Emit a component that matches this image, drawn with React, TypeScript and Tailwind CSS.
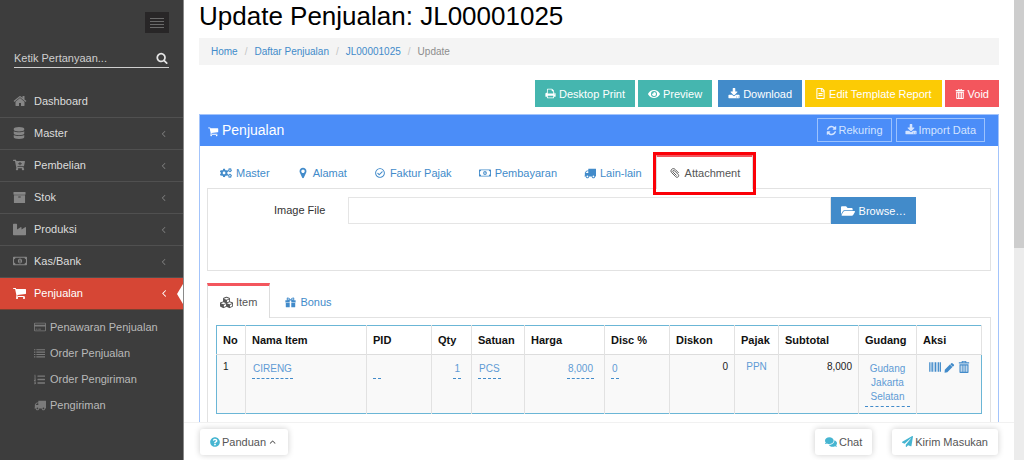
import type { ReactNode } from "react";
import {
  FaDatabase, FaCartPlus, FaIndustry, FaRegMoneyBillAlt, FaListOl,
  FaEye, FaRegFileAlt, FaCogs, FaRegCheckCircle, FaFolderOpen, FaCubes,
  FaQuestionCircle, FaComments, FaPaperPlane,
} from "react-icons/fa";

function glyph(d: string) {
  return function Glyph({ className = "" }: { className?: string }) {
    return (
      <svg viewBox="0 0 1792 1792" fill="currentColor" fillRule="evenodd" className={`shrink-0 ${className}`} aria-hidden="true">
        <path d={d} />
      </svg>
    );
  };
}

const Cart = glyph("M640 1536q0 52-38 90t-90 38-90-38-38-90 38-90 90-90 90 38 38 90zm896 0q0 52-38 90t-90 38-90-38-38-90 38-90 90-90 90 38 38 90zm128-1088v512q0 24-16.5 42.5t-40.5 21.5l-1044 122q13 60 13 70 0 16-24 64h920q26 0 45 19t19 45-19 45-45 19h-1024q-26 0-45-19t-19-45q0-11 8-31.5t16-36 21.5-40 15.5-29.5l-177-823h-204q-26 0-45-19t-19-45 19-45 45-19h256q16 0 28.5 6.5t19.5 15.5 13 24.5 8 26 5.5 29.5 4.5 26h1201q26 0 45 19t19 45z");
const Home = glyph("M1472 992v480q0 26-19 45t-45 19h-384v-384h-256v384h-384q-26 0-45-19t-19-45v-480q0-1 .5-3t.5-3l575-474 575 474q1 2 1 6zm223-69l-62 74q-8 9-21 11h-3q-13 0-21-7l-692-577-692 577q-12 8-24 7-13-2-21-11l-62-74q-8-10-7-23.5t11-21.5l719-599q32-26 76-26t76 26l244 204v-195q0-14 9-23t23-9h192q14 0 23 9t9 23v408l219 182q10 8 11 21.5t-7 23.5z");
const Search = glyph("M1216 832q0-185-131.5-316.5t-316.5-131.5-316.5 131.5-131.5 316.5 131.5 316.5 316.5 131.5 316.5-131.5 131.5-316.5zm512 832q0 52-38 90t-90 38q-54 0-90-38l-343-342q-179 124-399 124-143 0-273.5-55.5t-225-150-150-225-55.5-273.5 55.5-273.5 150-225 225-150 273.5-55.5 273.5 55.5 225 150 150 225 55.5 273.5q0 220-124 399l343 343q37 37 37 90z");
const Download = glyph("M1344 1344q0-26-19-45t-45-19-45 19-19 45 19 45 45 19 45-19 19-45zm256 0q0-26-19-45t-45-19-45 19-19 45 19 45 45 19 45-19 19-45zm128-224v320q0 40-28 68t-68 28h-1472q-40 0-68-28t-28-68v-320q0-40 28-68t68-28h465l135 136q58 56 136 56t136-56l136-136h464q40 0 68 28t28 68zm-325-569q17 41-14 70l-448 448q-18 19-45 19t-45-19l-448-448q-31-29-14-70 17-39 59-39h256v-448q0-26 19-45t45-19h256q26 0 45 19t19 45v448h256q42 0 59 39z");
const Print = glyph("M448 1536h896v-256h-896v256zm0-640h896v-384h-160q-40 0-68-28t-28-68v-160h-640v640zm1152 64q0-26-19-45t-45-19-45 19-19 45 19 45 45 19 45-19 19-45zm128 0v416q0 13-9.5 22.5t-22.5 9.5h-224v160q0 40-28 68t-68 28h-960q-40 0-68-28t-28-68v-160h-224q-13 0-22.5-9.5t-9.5-22.5v-416q0-79 56.5-135.5t135.5-56.5h64v-544q0-40 28-68t68-28h672q40 0 88 20t76 48l152 152q28 28 48 76t20 88v256h64q79 0 135.5 56.5t56.5 135.5z");
const Truck = glyph("M640 1408q0-52-38-90t-90-38-90 38-38 90 38 90 90 38 90-38 38-90zm-384-512h384v-256h-158q-13 0-22 9l-195 195q-9 9-9 22v30zm1280 512q0-52-38-90t-90-38-90 38-38 90 38 90 90 38 90-38 38-90zm256-1088v1024q0 15-4 26.5t-13.5 18.5-16.5 11.5-23.5 6-22.5 2-25.5 0-22.5-.5q0 106-75 181t-181 75-181-75-75-181h-384q0 106-75 181t-181 75-181-75-75-181h-64q-3 0-22.5.5t-25.5 0-22.5-2-23.5-6-16.5-11.5-13.5-18.5-4-26.5q0-26 19-45t45-19v-320q0-8-.5-35t0-38 2.5-34.5 6.5-37 14-30.5 22.5-30l198-198q19-19 50.5-32t58.5-13h160v-192q0-26 19-45t45-19h1024q26 0 45 19t19 45z");
const Trash = glyph("M640 0h512q100 0 100 100v92h412v192H128V192h412v-92q0-100 100-100zM700 110v82h392v-82zM220 500h1352v1172q0 120-120 120H340q-120 0-120-120zM400 660v960h150V660zM700 660v960h120V660zM970 660v960h120V660zM1240 660v960h150V660z");
const Pencil = glyph("M960 416l416 416-832 832-448 96 32-512zm683 96q0 53-37 90l-166 166-416-416 166-165q36-38 90-38 53 0 91 38l235 234q37 39 37 91z");
const Marker = glyph("M1152 640q0-106-75-181t-181-75-181 75-75 181 75 181 181 75 181-75 75-181zm256 0q0 109-33 179l-364 774q-16 33-47.5 52t-67.5 19-67.5-19-46.5-52l-365-774q-33-70-33-179 0-212 150-362t362-150 362 150 150 362z");
const AngleLeft = glyph("M1203 544q0 13-10 23l-393 393 393 393q10 10 10 23t-10 23l-50 50q-10 10-23 10t-23-10l-466-466q-10-10-10-23t10-23l466-466q10-10 23-10t23 10l50 50q10 10 10 23z");
const Archive = glyph("M1088 832q0-26-19-45t-45-19h-256q-26 0-45 19t-19 45 19 45 45 19h256q26 0 45-19t19-45zm576-192v960q0 26-19 45t-45 19h-1408q-26 0-45-19t-19-45v-960q0-26 19-45t45-19h1408q26 0 45 19t19 45zm64-448v256q0 26-19 45t-45 19h-1536q-26 0-45-19t-19-45v-256q0-26 19-45t45-19h1536q26 0 45 19t19 45z");
const Refresh = glyph("M1639 1056q0 5-1 7-64 268-268 434.5t-478 166.5q-146 0-282.5-55t-243.5-157l-129 129q-19 19-45 19t-45-19-19-45v-448q0-26 19-45t45-19h448q26 0 45 19t19 45-19 45l-137 137q71 66 161 102t187 36q134 0 250-65t186-179q11-17 53-117 8-23 30-23h192q13 0 22.5 9.5t9.5 22.5zm25-800v448q0 26-19 45t-45 19h-448q-26 0-45-19t-19-45 19-45l138-138q-148-137-349-137-134 0-250 65t-186 179q-11 17-53 117-8 23-30 23h-199q-13 0-22.5-9.5t-9.5-22.5v-7q65-268 270-434.5t480-166.5q146 0 284 55.5t245 156.5l130-129q19-19 45-19t45 19 19 45z");
const List = glyph("M0 192h224v192H0zM384 192h1408v192H384zM0 576h224v192H0zM384 576h1408v192H384zM0 960h224v192H0zM384 960h1408v192H384zM0 1344h224v192H0zM384 1344h1408v192H384z");
const Card = glyph("M160 256h1472q160 0 160 160v960q0 160-160 160H160q-160 0-160-160V416q0-160 160-160zM128 384v192h1536V384zM128 832v576h1536V832zM256 1152h256v128H256zM640 1152h384v128H640z");
const Gift = glyph("M128 960h640v704H224q-96 0-96-96zM1024 960h640v608q0 96-96 96h-544zM64 512h330q-130-70-130-200 0-220 210-220 230 0 422 300 192-300 422-300 210 0 210 220 0 130-130 200h330v384h-704V560H768v336H64zM500 230q-90 0-90 85 0 100 130 100h210q-120-185-250-185zM1292 230q-130 0-250 185h210q130 0 130-100 0-85-90-85z");
const Barcode = glyph("M0 192h120v1408H0zM200 192h70v1408h-70zM360 192h220v1408H360zM700 192h70v1408h-70zM860 192h220v1408H860zM1180 192h70v1408h-70zM1350 192h200v1408h-200zM1650 192h142v1408h-142z");

function Paperclip({ className = "" }: { className?: string }) {
  return (
    <svg viewBox="0 0 16 16" fill="none" stroke="currentColor" strokeWidth="1.5" strokeLinecap="round" className={`shrink-0 ${className}`} aria-hidden="true">
      <path d="M13.5 7.5 8.2 2.2C6.5.5 4.300.5 2.700 2.100 1.100 3.700 1.100 5.900 2.800 7.600l6.300 6.300c1.300 1.300 2.900 1.300 4 .2s1.100-2.700-.2-4L7.200 4.400c-.8-.8-1.800-.8-2.400-.2s-.6 1.600.2 2.400l5 5" />
    </svg>
  );
}

const menu = [
  { label: "Dashboard", icon: <Home className="size-[14px]" />, arrow: false },
  { label: "Master", icon: <FaDatabase className="size-3" />, arrow: true },
  { label: "Pembelian", icon: <FaCartPlus className="size-3" />, arrow: true },
  { label: "Stok", icon: <Archive className="size-[13px]" />, arrow: true },
  { label: "Produksi", icon: <FaIndustry className="size-[13px]" />, arrow: true },
  { label: "Kas/Bank", icon: <FaRegMoneyBillAlt className="size-[14px]" />, arrow: true },
];

const submenu = [
  { label: "Penawaran Penjualan", icon: <Card className="size-3" /> },
  { label: "Order Penjualan", icon: <List className="size-[11px]" /> },
  { label: "Order Pengiriman", icon: <FaListOl className="size-[11px]" /> },
  { label: "Pengiriman", icon: <Truck className="size-3" /> },
];

function Sidebar() {
  return (
    <aside className="flex w-[184px] shrink-0 flex-col border-r border-[#8a8a8a] bg-[#3d3d3d] text-[11px] text-[#dcdcdc]">
      <div className="flex justify-end pt-3 pr-[14px]">
        <button type="button" aria-label="Menu" className="flex h-[21px] w-6 flex-col items-center justify-center gap-[2px] bg-[#282627]">
          <span className="h-px w-[14px] bg-[#6a6a6a]" />
          <span className="h-px w-[14px] bg-[#6a6a6a]" />
          <span className="h-px w-[14px] bg-[#6a6a6a]" />
          <span className="h-px w-[14px] bg-[#6a6a6a]" />
        </button>
      </div>
      <form className="mx-[14px] mt-4 mb-[18px] flex h-[19px] items-center border-b border-[#cfcfcf]">
        <input aria-label="Ketik Pertanyaan" placeholder="Ketik Pertanyaan..." className="min-w-0 flex-1 bg-transparent outline-none placeholder:text-[#cfcfcf]" />
        <button type="button" aria-label="Cari" className="pr-[1px] text-[#e4e4e4]">
          <Search className="size-3" />
        </button>
      </form>
      <nav>
        {menu.map((m) => (
          <a key={m.label} href="#" className="flex h-8 items-center border-b border-[#505050] pr-[14px] pb-px pl-[13px]">
            <span className="flex w-[21px] items-center text-[#868686]">{m.icon}</span>
            <span className="flex-1">{m.label}</span>
            {m.arrow && <AngleLeft className="size-[11px] text-[#7c7c7c]" />}
          </a>
        ))}
        <a href="#" className="relative flex h-8 items-center border-b border-[#7a4030] bg-[#d64635] pr-[13px] pb-px pl-[13px] text-white">
          <span className="flex w-[21px] items-center"><Cart className="size-[14px]" /></span>
          <span className="flex-1">Penjualan</span>
          <AngleLeft className="size-3" />
          <span className="absolute top-[6px] right-0 border-y-[10px] border-r-[6px] border-y-transparent border-r-white" />
        </a>
        <div className="pt-1">
          {submenu.map((m) => (
            <a key={m.label} href="#" className="flex h-[26px] items-center pl-[34px] text-[#b9b9b9]">
              <span className="flex w-4 items-center text-[#7b7b7b]">{m.icon}</span>
              {m.label}
            </a>
          ))}
        </div>
      </nav>
    </aside>
  );
}

function ActionButton({ color, icon, children }: { color: string; icon: ReactNode; children: ReactNode }) {
  return (
    <button type="button" className={`flex h-[27px] items-center gap-[3px] px-[10px] text-white ${color}`}>
      {icon}
      {children}
    </button>
  );
}

function HeaderButton({ icon, children }: { icon: ReactNode; children: ReactNode }) {
  return (
    <button type="button" className="flex h-6 items-center gap-[2px] border border-[#9cc2fd] px-2 text-[#d3e4ff]">
      {icon}
      {children}
    </button>
  );
}

function Tab({ icon, label, active = false, marked = false }: { icon: ReactNode; label: string; active?: boolean; marked?: boolean }) {
  return (
    <button
      type="button"
      role="tab"
      aria-selected={active}
      className={`relative -mb-px flex h-[35px] items-center gap-1 border-x border-t-[3px] px-3 ${
        active ? "border-x-[#dddddd] border-t-[#f3565d] bg-white text-[#555555]" : "border-transparent text-[#428bca]"
      }`}
    >
      <span className="flex w-3 justify-center">{icon}</span>
      {label}
      {marked && <span className="absolute -inset-x-1 -top-[5px] -bottom-[6px] border-3 border-[#fb0007]" />}
    </button>
  );
}

const columns = [
  { label: "No", width: "w-[29px]" },
  { label: "Nama Item", width: "w-[121px]" },
  { label: "PID", width: "w-[65px]" },
  { label: "Qty", width: "w-[40px]" },
  { label: "Satuan", width: "w-[53px]" },
  { label: "Harga", width: "w-[80px]" },
  { label: "Disc %", width: "w-[65px]" },
  { label: "Diskon", width: "w-[65px]" },
  { label: "Pajak", width: "w-[44px]" },
  { label: "Subtotal", width: "w-[80px]" },
  { label: "Gudang", width: "w-[58px]" },
  { label: "Aksi", width: "w-[65px]" },
];

function Edit({ children }: { children?: ReactNode }) {
  return (
    <a href="#" className="inline-block min-h-[17px] min-w-2 border-b border-dashed border-[#428bca] px-px pb-[2px] align-top leading-[14px] text-[#5f9bd5]">
      {children}
    </a>
  );
}

function ItemTable() {
  const cell = "border-r border-[#e2e2e2] px-[6px] pt-[7px] pb-1";
  const plain = "border-r border-[#e2e2e2] px-[6px] pt-[5px]";
  return (
    <table className="w-full table-fixed border-collapse border border-[#6bb6d6] text-left">
      <thead>
        <tr className="h-[29px] border-b border-[#dddddd]">
          {columns.map((c) => (
            <th key={c.label} className={`border-r border-[#e2e2e2] px-[6px] font-bold text-[#111111] ${c.width}`}>{c.label}</th>
          ))}
        </tr>
      </thead>
      <tbody>
        <tr className="h-[59px] bg-[#f9f9f9] align-top text-[10px] leading-[14px] text-[#222222]">
          <td className={plain}>1</td>
          <td className={cell}><Edit>CIRENG</Edit></td>
          <td className={cell}><Edit /></td>
          <td className={`${cell} pr-[10px] text-right`}><Edit>1</Edit></td>
          <td className={cell}><Edit>PCS</Edit></td>
          <td className={`${cell} pr-[10px] text-right`}><Edit>8,000</Edit></td>
          <td className={cell}><Edit>0</Edit></td>
          <td className={`${plain} text-right`}>0</td>
          <td className={`${plain} text-center`}><a href="#" className="text-[#5f9bd5]">PPN</a></td>
          <td className={`${plain} text-right`}>8,000</td>
          <td className={`${cell} text-center`}><Edit>Gudang Jakarta Selatan</Edit></td>
          <td className="pt-[6px] pl-3">
            <div className="flex items-center gap-[3px] text-[#428bca]">
              <button type="button" aria-label="Barcode"><Barcode className="size-3" /></button>
              <button type="button" aria-label="Edit"><Pencil className="size-[11px]" /></button>
              <button type="button" aria-label="Hapus"><Trash className="size-3" /></button>
            </div>
          </td>
        </tr>
      </tbody>
    </table>
  );
}

function FooterButton({ icon, children }: { icon: ReactNode; children: ReactNode }) {
  return (
    <button type="button" className="flex h-[26px] items-center gap-[2px] rounded-[3px] bg-white px-[10px] text-[#555555] shadow-[0_0_6px_rgba(0,0,0,0.2)]">
      {icon}
      {children}
    </button>
  );
}

export default function App() {
  return (
    <div className="flex h-screen overflow-hidden bg-white font-['Liberation_Sans',Arial,sans-serif] text-[11px] leading-4 text-[#333333]">
      <Sidebar />
      <div className="flex min-w-0 flex-1 flex-col">
        <main className="min-h-0 flex-1 overflow-hidden px-[15px]">
          <h1 className="text-[26px] leading-8 text-black">Update Penjualan: JL00001025</h1>
          <nav className="mt-[6px] flex h-[27px] items-center bg-[#f4f4f4] px-3 text-[10px] text-[#428bca]">
            <a href="#">Home</a>
            <span className="px-[7px] text-[#c4c4c4]">/</span>
            <a href="#">Daftar Penjualan</a>
            <span className="px-[7px] text-[#c4c4c4]">/</span>
            <a href="#">JL00001025</a>
            <span className="px-[7px] text-[#c4c4c4]">/</span>
            <span className="text-[#8d8d8d]">Update</span>
          </nav>
          <div className="mt-[15px] mb-[7px] flex justify-end gap-[3px]">
            <ActionButton color="bg-[#45b6af]" icon={<Print className="size-[11px]" />}>Desktop Print</ActionButton>
            <ActionButton color="bg-[#45b6af] mr-[3px]" icon={<FaEye className="size-3" />}>Preview</ActionButton>
            <ActionButton color="bg-[#428bca]" icon={<Download className="size-3" />}>Download</ActionButton>
            <ActionButton color="bg-[#fccb05]" icon={<FaRegFileAlt className="size-[11px]" />}>Edit Template Report</ActionButton>
            <ActionButton color="bg-[#f3565d]" icon={<Trash className="size-[10px]" />}>Void</ActionButton>
          </div>
          <section className="border border-[#a3c4fb]">
            <header className="flex h-[31px] items-center justify-between bg-[#4b8df8] pr-[13px] pb-px pl-2">
              <h2 className="flex items-center gap-[3px] text-[14px] text-white">
                <Cart className="mt-[2px] size-[11px]" />
                Penjualan
              </h2>
              <div className="flex gap-1">
                <HeaderButton icon={<Refresh className="size-[11px]" />}>Rekuring</HeaderButton>
                <HeaderButton icon={<Download className="size-3" />}>Import Data</HeaderButton>
              </div>
            </header>
            <div className="px-[7px] pt-2">
              <div role="tablist" className="flex gap-px">
                <Tab icon={<FaCogs className="size-3" />} label="Master" />
                <Tab icon={<Marker className="size-3" />} label="Alamat" />
                <Tab icon={<FaRegCheckCircle className="size-[10px]" />} label="Faktur Pajak" />
                <Tab icon={<FaRegMoneyBillAlt className="size-3" />} label="Pembayaran" />
                <Tab icon={<Truck className="size-3" />} label="Lain-lain" />
                <Tab icon={<Paperclip className="size-[10px]" />} label="Attachment" active marked />
              </div>
              <div className="flex h-[83px] items-start border border-[#e2e2e2] pt-2">
                <label htmlFor="image-file" className="w-[15%] pt-[5px] text-right">Image File</label>
                <div className="ml-[23px] flex w-[568px] max-w-[75%]">
                  <input id="image-file" className="h-[27px] min-w-0 flex-1 border border-[#e5e5e5] px-2 outline-none" />
                  <button type="button" className="flex h-[27px] items-center gap-1 bg-[#428bca] px-[10px] text-white">
                    <FaFolderOpen className="size-[14px]" />
                    Browse…
                  </button>
                </div>
              </div>
              <div role="tablist" className="mt-3 flex gap-px">
                <Tab icon={<FaCubes className="size-[13px] shrink-0" />} label="Item" active />
                <Tab icon={<Gift className="size-[11px]" />} label="Bonus" />
              </div>
              <div className="border border-[#e2e2e2] px-2 py-[7px]">
                <ItemTable />
                <div className="h-8" />
              </div>
            </div>
          </section>
        </main>
        <footer className="flex h-[38px] shrink-0 items-center justify-between border-t border-[#f1f1f1] bg-white px-4">
          <FooterButton icon={<FaQuestionCircle className="size-[10px] text-[#46b5d1]" />}>
            Panduan
            <AngleLeft className="size-[10px] rotate-90" />
          </FooterButton>
          <div className="flex gap-5">
            <FooterButton icon={<FaComments className="size-3 text-[#46b5d1]" />}>Chat</FooterButton>
            <FooterButton icon={<FaPaperPlane className="size-[11px] text-[#46b5d1]" />}>Kirim Masukan</FooterButton>
          </div>
        </footer>
      </div>
      <div className="w-[10px] shrink-0 bg-[#ececec]" aria-hidden="true">
        <div className="h-[54%] bg-[#cdcdcd]" />
      </div>
    </div>
  );
}
